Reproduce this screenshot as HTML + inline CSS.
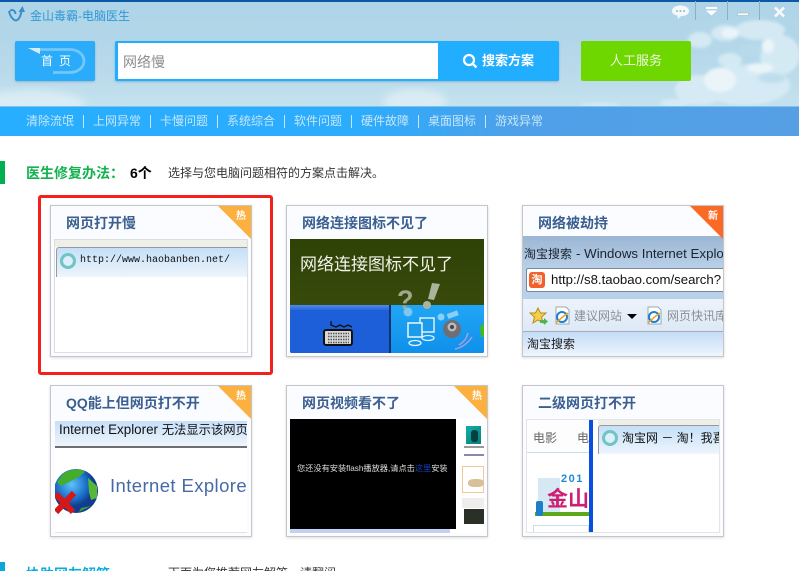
<!DOCTYPE html>
<html><head><meta charset="utf-8">
<style>
html,body{margin:0;padding:0;background:#fff;overflow:hidden}
body{width:799px;height:571px;overflow:hidden;position:relative;font-family:"Liberation Sans","Noto Sans CJK SC",sans-serif}
.a{position:absolute;white-space:nowrap}
.card{position:absolute;width:200px;height:150px;border:1px solid #c4c6c9;background:#fbfcff;box-shadow:0 1px 3px rgba(0,0,0,.14);overflow:hidden}
.t{position:absolute;left:15px;top:7px;font-size:14px;line-height:20px;font-weight:bold;color:#3a5f90;white-space:nowrap}
.img{position:absolute;overflow:hidden}
.badge{position:absolute;right:0;top:0;width:0;height:0;border-top:33px solid #fbb040;border-left:33px solid transparent}
.bt{position:absolute;right:5px;top:4px;color:#fff;font-size:10px;line-height:14px;font-weight:bold}
.n{position:absolute;top:113px;font-size:12px;line-height:16px;color:#c4e6fa;white-space:nowrap}
</style></head><body>

<!-- header sky -->
<div class="a" style="left:0;top:0;width:799px;height:106px;background:linear-gradient(#aed4e7,#b5d8ea 55%,#c4e1ee)"></div>
<svg class="a" style="left:0;top:0" width="799" height="106">
<defs><filter id="b"><feGaussianBlur stdDeviation="4"/></filter><filter id="c"><feGaussianBlur stdDeviation="1.600"/></filter></defs>
<g filter="url(#b)" fill="#e4f2f8" opacity=".7"><ellipse cx="30" cy="104" rx="55" ry="14"/><ellipse cx="415" cy="102" rx="32" ry="13"/></g>
<g filter="url(#c)" fill="#d8ecf5" opacity=".9"><ellipse cx="745" cy="85" rx="45" ry="20"/><ellipse cx="700" cy="40" rx="12" ry="8"/><ellipse cx="725" cy="33" rx="14" ry="8"/><ellipse cx="760" cy="30" rx="25" ry="10"/><ellipse cx="780" cy="55" rx="20" ry="20"/><ellipse cx="730" cy="60" rx="12" ry="7"/><ellipse cx="700" cy="90" rx="25" ry="15"/><ellipse cx="675" cy="103" rx="15" ry="4"/><ellipse cx="600" cy="105" rx="20" ry="2"/></g>
<g filter="url(#c)" fill="#f1f8fb" opacity=".8"><ellipse cx="720" cy="80" rx="16" ry="12"/><ellipse cx="760" cy="68" rx="13" ry="5"/><ellipse cx="730" cy="33" rx="9" ry="5"/><ellipse cx="768" cy="46" rx="6" ry="7"/></g>
<g filter="url(#c)" fill="#b9dbeb" opacity=".8"><ellipse cx="750" cy="50" rx="12" ry="6"/><ellipse cx="772" cy="78" rx="14" ry="5"/></g>
</svg>
<div class="a" style="left:0;top:0;width:799px;height:2px;background:#0b57a8"></div>

<!-- logo -->
<svg class="a" style="left:7px;top:5px" width="20" height="18" viewBox="0 0 20 18"><path d="M2 6 C3 12 7 15.500 9 15.500 C13 14.500 14 9 15 4" fill="none" stroke="#3a8fc8" stroke-width="2"/><path d="M11.500 7 L15.500 1 L18 7 Z" fill="#3a8fc8"/><path d="M3 6 C5 4 8 5 8.500 9" fill="none" stroke="#3a8fc8" stroke-width="2"/></svg>
<div class="a" style="left:30px;top:8px;font-size:12px;line-height:17px;color:#2f97d8">金山毒霸-电脑医生</div>

<!-- window controls -->
<svg class="a" style="left:668px;top:0" width="131" height="22">
<path d="M12 5.500 C18 5.500 21 8 21 11 C21 14 18 16 13 16 L10 19 L9.500 15.500 C6 15 4 13.500 4 11 C4 8 7 5.500 12 5.500Z" fill="#f4f8fa"/>
<circle cx="9" cy="11" r="1" fill="#9bb"/><circle cx="12.500" cy="11" r="1" fill="#9bb"/><circle cx="16" cy="11" r="1" fill="#9bb"/>
<path d="M27.500 1V20M59.500 1V20M91.500 1V20" stroke="#8ab0c4" stroke-width="1"/>
<rect x="38" y="7" width="11" height="2" fill="#fff"/><path d="M38 10.500H49L43.500 15.500Z" fill="#fff"/>
<rect x="69.500" y="13" width="11" height="2.500" fill="#f6fafc" stroke="#8aa" stroke-width=".4"/>
<path d="M107 7.500L116 16.500M116 7.500L107 16.500" stroke="#f8fbfc" stroke-width="2.600"/>
</svg>

<!-- home button -->
<div class="a" style="left:15px;top:41px;width:80px;height:40px;background:#2aacfb;border-radius:2px;box-shadow:0 1px 2px rgba(60,110,140,.35)"></div>
<svg class="a" style="left:27px;top:47px" width="60" height="28"><path d="M12 2.500H43C49 2.500 57 6 57 14 C57 21 50 25.500 43 25.500 H26" fill="none" stroke="#74c7fb" stroke-width="2.800"/><path d="M1 1L13 1L13 7Z" fill="#d4edfb"/></svg>
<div class="a" style="left:41px;top:53px;font-size:12px;line-height:17px;color:#fff;letter-spacing:6px">首页</div>

<!-- search -->
<div class="a" style="left:115px;top:41px;width:444px;height:40px;background:#22aeff;border-radius:2px;box-shadow:0 1px 2px rgba(60,110,140,.35)"></div>
<div class="a" style="left:118px;top:43px;width:320px;height:36px;background:#fff"></div>
<div class="a" style="left:123px;top:53px;font-size:14px;line-height:18px;color:#8d8d8d">网络慢</div>
<svg class="a" style="left:462px;top:53px" width="16" height="16"><circle cx="7" cy="7" r="5" fill="none" stroke="#fff" stroke-width="2.200"/><path d="M10.500 10.500L14.500 14.500" stroke="#fff" stroke-width="2.400"/></svg>
<div class="a" style="left:482px;top:52px;font-size:13px;line-height:18px;font-weight:bold;color:#fff">搜索方案</div>

<!-- service -->
<div class="a" style="left:581px;top:41px;width:110px;height:40px;background:#6fd700;border-radius:2px"></div>
<div class="a" style="left:610px;top:52px;font-size:13px;line-height:18px;color:#eef9dc">人工服务</div>

<!-- nav -->
<div class="a" style="left:0;top:106px;width:799px;height:30px;background:linear-gradient(90deg,#28aeff 0,#2cacfd 45%,#4ea0e8 65%,#569fe5 100%);border-top:1px solid #7cc4ec;box-sizing:border-box"></div>
<div class="n" style="left:26px">清除流氓</div><div class="a" style="left:83px;top:115px;width:1px;height:13px;background:#c4e6fa"></div>
<div class="n" style="left:93px">上网异常</div><div class="a" style="left:150px;top:115px;width:1px;height:13px;background:#c4e6fa"></div>
<div class="n" style="left:160px">卡慢问题</div><div class="a" style="left:217px;top:115px;width:1px;height:13px;background:#c4e6fa"></div>
<div class="n" style="left:227px">系统综合</div><div class="a" style="left:284px;top:115px;width:1px;height:13px;background:#c4e6fa"></div>
<div class="n" style="left:294px">软件问题</div><div class="a" style="left:351px;top:115px;width:1px;height:13px;background:#c4e6fa"></div>
<div class="n" style="left:361px">硬件故障</div><div class="a" style="left:418px;top:115px;width:1px;height:13px;background:#c4e6fa"></div>
<div class="n" style="left:428px">桌面图标</div><div class="a" style="left:485px;top:115px;width:1px;height:13px;background:#c4e6fa"></div>
<div class="n" style="left:495px">游戏异常</div>

<!-- section title -->
<div class="a" style="left:0;top:161px;width:5px;height:23px;background:#00b050"></div>
<div class="a" style="left:26px;top:164px;font-size:14px;line-height:18px;font-weight:bold;color:#13b24f">医生修复办法：</div>
<div class="a" style="left:130px;top:164px;font-size:14px;line-height:18px;font-weight:bold;color:#000">6个</div>
<div class="a" style="left:168px;top:165px;font-size:12px;line-height:16px;color:#333">选择与您电脑问题相符的方案点击解决。</div>

<!-- red selection -->
<div class="a" style="left:38px;top:195px;width:235px;height:180px;box-sizing:border-box;border:3px solid #f5201c;border-radius:3px"></div>

<!-- Card 1 -->
<div class="card" style="left:50px;top:205px">
<div class="t">网页打开慢</div>
<div class="img" style="left:3px;top:33px;width:194px;height:114px;background:#fff;border:1px solid #dcdfe0;box-sizing:border-box">
<div class="a" style="left:0;top:0;width:194px;height:7px;background:#efefea"></div>
<div class="a" style="left:1px;top:7px;width:193px;height:30px;background:linear-gradient(#c4dff8,#eef5fc);border:1px solid #999;border-width:1px 0 0 1px;border-radius:3px 0 0 0;box-sizing:border-box"></div>
<div class="a" style="left:5px;top:13px;width:16px;height:16px;box-sizing:border-box;border:3px solid #6fc4c4;border-radius:50%;background:#dfeffa"></div>
<div class="a" style="left:25px;top:14px;font-family:'Liberation Mono',monospace;font-size:10px;line-height:14px;color:#111">http://www.haobanben.net/</div>
</div>
<div class="badge"></div><div class="bt">热</div>
</div>

<!-- Card 2 -->
<div class="card" style="left:286px;top:205px">
<div class="t">网络连接图标不见了</div>
<div class="img" style="left:3px;top:33px;width:194px;height:114px;background:linear-gradient(#2f4206,#3d5010);border-radius:0 0 2px 2px">
<div class="a" style="left:10px;top:14px;font-size:17px;line-height:24px;color:#f2f2ea">网络连接图标不见了</div>
<div class="a" style="left:0;top:66px;width:194px;height:48px;background:#1c5fd8"></div>
<div class="a" style="left:0;top:66px;width:99px;height:5px;background:linear-gradient(#4f8ae8,#2a68dc)"></div>
<div class="a" style="left:99px;top:66px;width:2px;height:48px;background:#10306f"></div>
<div class="a" style="left:101px;top:66px;width:93px;height:48px;background:linear-gradient(#21a6f6,#0f90ea)"></div>
<div class="a" style="left:107px;top:46px;font-size:27px;line-height:30px;font-weight:bold;color:#9ea88e">?</div>
<svg class="a" style="left:0;top:40px" width="194" height="74">
<path d="M142 4L150 5L144 21L138 20Z" fill="#aab49c"/><circle cx="137" cy="26" r="4" fill="#aab49c"/>
<circle cx="118" cy="33" r="4.500" fill="#7cc6f0"/>
<circle cx="151" cy="38" r="3.500" fill="#8ad0f5"/>
<rect x="157" y="33" width="11" height="5" fill="#8ad0f5" transform="rotate(-20 163 35)"/>
<rect x="130" y="39" width="14" height="14" fill="#1c9bea" stroke="#d8f2fd" stroke-width="1.500"/><rect x="118" y="44" width="14" height="14" fill="#1c9bea" stroke="#e8f8fd" stroke-width="1.500"/>
<ellipse cx="125" cy="64" rx="6" ry="2.500" fill="none" stroke="#e8f8fd" stroke-width="1.300"/><ellipse cx="138" cy="59" rx="6" ry="2.500" fill="none" stroke="#d8f2fd" stroke-width="1.300"/>
<circle cx="162" cy="50" r="9" fill="#6e6e74"/><circle cx="162" cy="48" r="4.500" fill="#bbb"/><circle cx="162" cy="48" r="2" fill="#444"/>
<path d="M169 66 Q176 62 178 54" fill="none" stroke="#a8a0e0" stroke-width="1.500"/><path d="M165 70 Q175 68 182 58" fill="none" stroke="#a8a0e0" stroke-width="1.500"/>
<path d="M190 48L194 44V58H191Z" fill="#47b81e"/>
<path d="M41 42 V46 L46 48 L50 46 L54 48 L58 46 L62 48" fill="none" stroke="#111" stroke-width="1.300"/>
<rect x="34" y="51" width="28" height="15" rx="2" fill="#d8d8d8" stroke="#111" stroke-width="2"/>
<path d="M38 54.500H59M38 57.500H59M38 60.500H59M38 63.500H59" stroke="#555" stroke-width="1.400" stroke-dasharray="1.500 1"/>
</svg>
</div>
</div>

<!-- Card 3 -->
<div class="card" style="left:522px;top:205px">
<div class="t">网络被劫持</div>
<div class="img" style="left:0;top:30px;width:200px;height:120px;background:linear-gradient(#9bb6d4,#bcd3ea 30%,#b7d0ea 60%)">
<div class="a" style="left:1px;top:9px;font-size:12px;line-height:18px;color:#1b2430">淘宝搜索<span style="font-size:13.300px;margin-left:4px">- Windows Internet Explorer</span></div>
<div class="a" style="left:3px;top:32px;width:210px;height:24px;background:#fff;border:1px solid #7d8793;border-radius:2px;box-sizing:border-box"></div>
<div class="a" style="left:6px;top:36px;width:16px;height:16px;background:#f2602b;border-radius:3px;color:#fff;font-size:11px;line-height:16px;text-align:center;font-weight:bold">淘</div>
<div class="a" style="left:28px;top:36px;font-size:13.200px;line-height:16px;color:#111">http://s8.taobao.com/search?</div>
<div class="a" style="left:0;top:63px;width:200px;height:32px;background:linear-gradient(#edf3fa,#dde9f7)"></div>
<svg class="a" style="left:6px;top:67px" width="190" height="24">
<path d="M9 5L11.500 10H17L12.500 14L14 20L9 17L4 20L5.500 14L1 10H6.500Z" fill="#f5cf4a" stroke="#b98c1c"/><path d="M11 17H15V15L19 18.500L15 22V20H11Z" fill="#4cb84c"/>
<path d="M27 4H37L40 7V21H27Z" fill="#fff" stroke="#9aa"/><circle cx="33" cy="14" r="5" fill="none" stroke="#1e7fd0" stroke-width="2"/><path d="M27 20 Q33 14 39 10" stroke="#f0a020" stroke-width="1.500" fill="none"/>
<path d="M119 4H129L132 7V21H119Z" fill="#fff" stroke="#9aa"/><circle cx="125" cy="14" r="5" fill="none" stroke="#1e7fd0" stroke-width="2"/><path d="M119 20 Q125 14 131 10" stroke="#f0a020" stroke-width="1.500" fill="none"/>
<path d="M98 11H108L103 16Z" fill="#000"/>
</svg>
<div class="a" style="left:51px;top:72px;font-size:12px;line-height:16px;color:#8a8f95">建议网站</div>
<div class="a" style="left:144px;top:72px;font-size:12px;line-height:16px;color:#8a8f95">网页快讯库</div>
<div class="a" style="left:0;top:95px;width:200px;height:1px;background:#a9acb0"></div>
<div class="a" style="left:0;top:96px;width:200px;height:24px;background:linear-gradient(#c3dcf8,#eef5fc)"></div>
<div class="a" style="left:4px;top:100px;font-size:12px;line-height:16px;color:#1b1b1b">淘宝搜索</div>
</div>
<div class="badge" style="border-top-color:#fb6a24"></div><div class="bt">新</div>
</div>

<!-- Card 4 -->
<div class="card" style="left:50px;top:385px">
<div class="t">QQ能上但网页打不开</div>
<div class="img" style="left:4px;top:35px;width:192px;height:112px;background:#fff;border-bottom:1px solid #dfe2e5;box-sizing:border-box">
<div class="a" style="left:0;top:0;width:192px;height:25px;background:linear-gradient(#c6dff8,#eef5fc)"></div>
<div class="a" style="left:0;top:25px;width:192px;height:2px;background:#6e6e6e"></div>
<div class="a" style="left:4px;top:-1px;font-size:13.400px;line-height:20px;color:#111">Internet Explorer <span style="font-size:12.300px">无法显示该网页</span></div>
<div class="a" style="left:55px;top:52px;font-size:18.500px;line-height:26px;letter-spacing:.4px;color:#476aa6">Internet Explorer</div>
<svg class="a" style="left:0;top:47px" width="50" height="50">
<defs><radialGradient id="g" cx=".4" cy=".35"><stop offset="0" stop-color="#5cc4f8"/><stop offset=".7" stop-color="#1a6cc8"/><stop offset="1" stop-color="#123c90"/></radialGradient></defs>
<circle cx="21" cy="23" r="22" fill="url(#g)"/><path d="M8 6C14 1 26 0 30 4L22 10L14 14L6 18L2 14Z" fill="#44ae2c"/><path d="M33 10L42 18L42 30L36 32L34 24Z" fill="#57b838"/><path d="M26 40L24 44L36 38Z" fill="#3aa030"/>
<path d="M1 26L18 44M19 25L1 44" stroke="#d41818" stroke-width="6"/>
</svg>
</div>
<div class="badge"></div><div class="bt">热</div>
</div>

<!-- Card 5 -->
<div class="card" style="left:286px;top:385px">
<div class="t">网页视频看不了</div>
<div class="img" style="left:3px;top:33px;width:194px;height:114px;background:#fff">
<div class="a" style="left:0;top:0;width:166px;height:110px;background:#000"></div>
<div class="a" style="left:0;top:110px;width:160px;height:4px;background:#c3d2f3"></div>
<div class="a" style="left:7px;top:44px;font-size:8.200px;line-height:11px;color:#ddd">您还没有安装flash播放器,请点击<span style="color:#1540c0">这里</span>安装</div>
<div class="a" style="left:176px;top:7px;width:15px;height:18px;background:linear-gradient(135deg,#10b0a8,#0d7c78)"></div>
<div class="a" style="left:181px;top:11px;width:7px;height:12px;background:#063f40;border-radius:3px"></div>
<div class="a" style="left:174px;top:27px;width:20px;height:2px;background:#999"></div>
<div class="a" style="left:174px;top:35px;width:20px;height:2px;background:#88a"></div>
<div class="a" style="left:172px;top:47px;width:22px;height:27px;border:1px solid #f2c896;box-sizing:border-box;background:#fff"></div>
<div class="a" style="left:178px;top:60px;width:16px;height:8px;background:#d8c09a;border-radius:40%"></div>
<div class="a" style="left:172px;top:79px;width:22px;height:10px;background:#eee"></div>
<div class="a" style="left:174px;top:90px;width:20px;height:15px;background:#2a2f28"></div>
</div>
<div class="badge"></div><div class="bt">热</div>
</div>

<!-- Card 6 -->
<div class="card" style="left:522px;top:385px">
<div class="t">二级网页打不开</div>
<div class="img" style="left:3px;top:33px;width:194px;height:114px;background:#fff;border:1px solid #e3e5e6;box-sizing:border-box">
<div class="a" style="left:0;top:0;width:62px;height:32px;background:#fdfdfd;border-bottom:1px solid #c8e0ee"></div>
<div class="a" style="left:6px;top:10px;font-size:12px;line-height:16px;color:#666">电影</div>
<div class="a" style="left:50px;top:10px;font-size:12px;line-height:16px;color:#666">电</div>
<div class="a" style="left:11px;top:58px;width:22px;height:36px;background:#c4def0;opacity:.7"></div>
<div class="a" style="left:34px;top:52px;font-size:11px;line-height:14px;font-weight:bold;letter-spacing:1.500px;color:#1c8ad8">201</div>
<div class="a" style="left:20px;top:67px;font-size:21px;line-height:26px;font-weight:bold;color:#cf1d74">金山</div>
<div class="a" style="left:8px;top:92px;width:54px;height:4px;background:#5fa81c"></div>
<div class="a" style="left:9px;top:81px;width:7px;height:15px;background:#1c7ec8;border-radius:2px"></div>
<div class="a" style="left:6px;top:105px;width:56px;height:9px;border:1px solid #c8e0ee;box-sizing:border-box"></div>
<div class="a" style="left:62px;top:0;width:4px;height:114px;background:#0a4ee0"></div>
<div class="a" style="left:71px;top:0;width:123px;height:5px;background:#efefea"></div>
<div class="a" style="left:71px;top:5px;width:123px;height:29px;background:linear-gradient(#c4dff8,#eef5fc);border-left:1px solid #999;border-top:1px solid #999;border-radius:3px 0 0 0;box-sizing:border-box"></div>
<div class="a" style="left:75px;top:10px;width:16px;height:16px;box-sizing:border-box;border:3px solid #6fc4c4;border-radius:50%;background:#dfeffa"></div>
<div class="a" style="left:95px;top:10px;font-size:12px;line-height:16px;color:#111">淘宝网 － 淘！我喜欢</div>
</div>
</div>

<!-- bottom section -->
<div class="a" style="left:0;top:562px;width:5px;height:9px;background:#08a8d8"></div>
<div class="a" style="left:26px;top:565px;font-size:14px;line-height:18px;font-weight:bold;color:#09aedb">协助网友解答</div>
<div class="a" style="left:168px;top:565px;font-size:12px;line-height:16px;color:#333">下面为您推荐网友解答，请翻阅</div>
</body></html>
